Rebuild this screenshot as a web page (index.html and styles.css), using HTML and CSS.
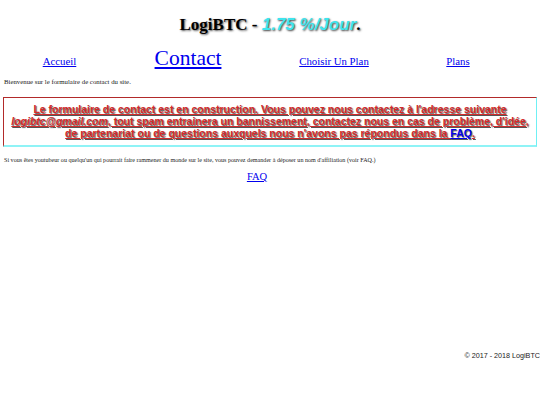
FILE: index.html
```html
<!DOCTYPE html>
<html lang="fr">
<head>
<meta charset="utf-8">
<title>LogiBTC - Contact</title>
<link rel="stylesheet" href="styles.css">
</head>
<body>
<header class="header">
  <h1 class="title">LogiBTC - <span class="rate">1.75 %/Jour</span>.</h1>
</header>
<nav class="nav">
  <div class="nav-cell"><a href="#" class="nav-link">Accueil</a></div>
  <div class="nav-cell"><a href="#" class="nav-link nav-current">Contact</a></div>
  <div class="nav-cell"><a href="#" class="nav-link">Choisir Un Plan</a></div>
  <div class="nav-cell"><a href="#" class="nav-link">Plans</a></div>
</nav>
<p class="small welcome">Bienvenue sur le formulaire de contact du site.</p>
<div class="notice">
  <p class="notice-text">Le formulaire de contact est en construction. Vous pouvez nous contactez à l'adresse suivante <em>logibtc@gmail.com</em>, tout spam entrainera un bannissement, contactez nous en cas de problème, d'idée, de partenariat ou de questions auxquels nous n'avons pas répondus dans la <a href="#" class="faq-inline">FAQ</a>.</p>
</div>
<p class="small affil">Si vous êtes youtubeur ou quelqu'un qui pourrait faire rammener du monde sur le site, vous pouvez demander à déposer un nom d'affiliation (voir FAQ.)</p>
<div class="faq-row"><a href="#" class="faq-link">FAQ</a></div>
<footer class="footer">© 2017 - 2018 LogiBTC</footer>
</body>
</html>
```
FILE: styles.css
```css
html, body {
  margin: 0;
  padding: 0;
  background: #fff;
}
body {
  font-family: "Liberation Serif", "Times New Roman", serif;
  color: #000;
}
.header {
  display: flex;
  justify-content: center;
  padding-top: 13px;
  height: 24px;
}
.title {
  margin: 0;
  font-size: 17px;
  line-height: 24px;
  font-weight: bold;
  text-shadow: 1px 1px 2px #555;
}
.rate {
  font-family: "Liberation Sans", Arial, sans-serif;
  font-style: italic;
  color: #3fe4ee;
  text-shadow: 1px 1px 2px #444;
}
.nav {
  display: grid;
  grid-template-columns: 119px 138px 154px 94px;
  align-items: baseline;
  margin-top: 9px;
  height: 30px;
}
.nav-cell {
  text-align: center;
}
.nav-link {
  color: #0000ee;
  font-size: 10.8px;
}
.nav-current {
  font-size: 21.5px;
}
.small {
  margin: 0;
  padding: 0 4px;
  line-height: 10px;
  color: #222;
}
.welcome {
  font-size: 6.8px;
  margin-top: 1px;
}
.notice {
  margin: 10px 3px 0 3px;
  border-top: 1px solid #b22a2a;
  border-left: 1px solid #b22a2a;
  border-right: 1px solid #6ff0f4;
  border-bottom: 2px solid #8ff3f6;
  padding: 5px 4px 6px;
}
.notice-text {
  margin: 0;
  text-align: center;
  font-family: "Liberation Sans", Arial, sans-serif;
  font-weight: bold;
  font-size: 10.5px;
  line-height: 12px;
  color: #d42a2a;
  text-decoration: underline;
  text-shadow: 1px 1px 1px #555;
}
.notice-text em {
  font-style: italic;
}
.faq-inline {
  color: #0000ee;
}
.affil {
  font-size: 6.1px;
  margin-top: 8px;
}
.faq-row {
  text-align: center;
  padding-right: 26px;
  margin-top: 1px;
}
.faq-link {
  color: #0000ee;
  font-size: 10.5px;
}
.footer {
  margin-top: 167px;
  text-align: right;
  font-family: "Liberation Sans", Arial, sans-serif;
  font-size: 7.2px;
  color: #222;
}
```
